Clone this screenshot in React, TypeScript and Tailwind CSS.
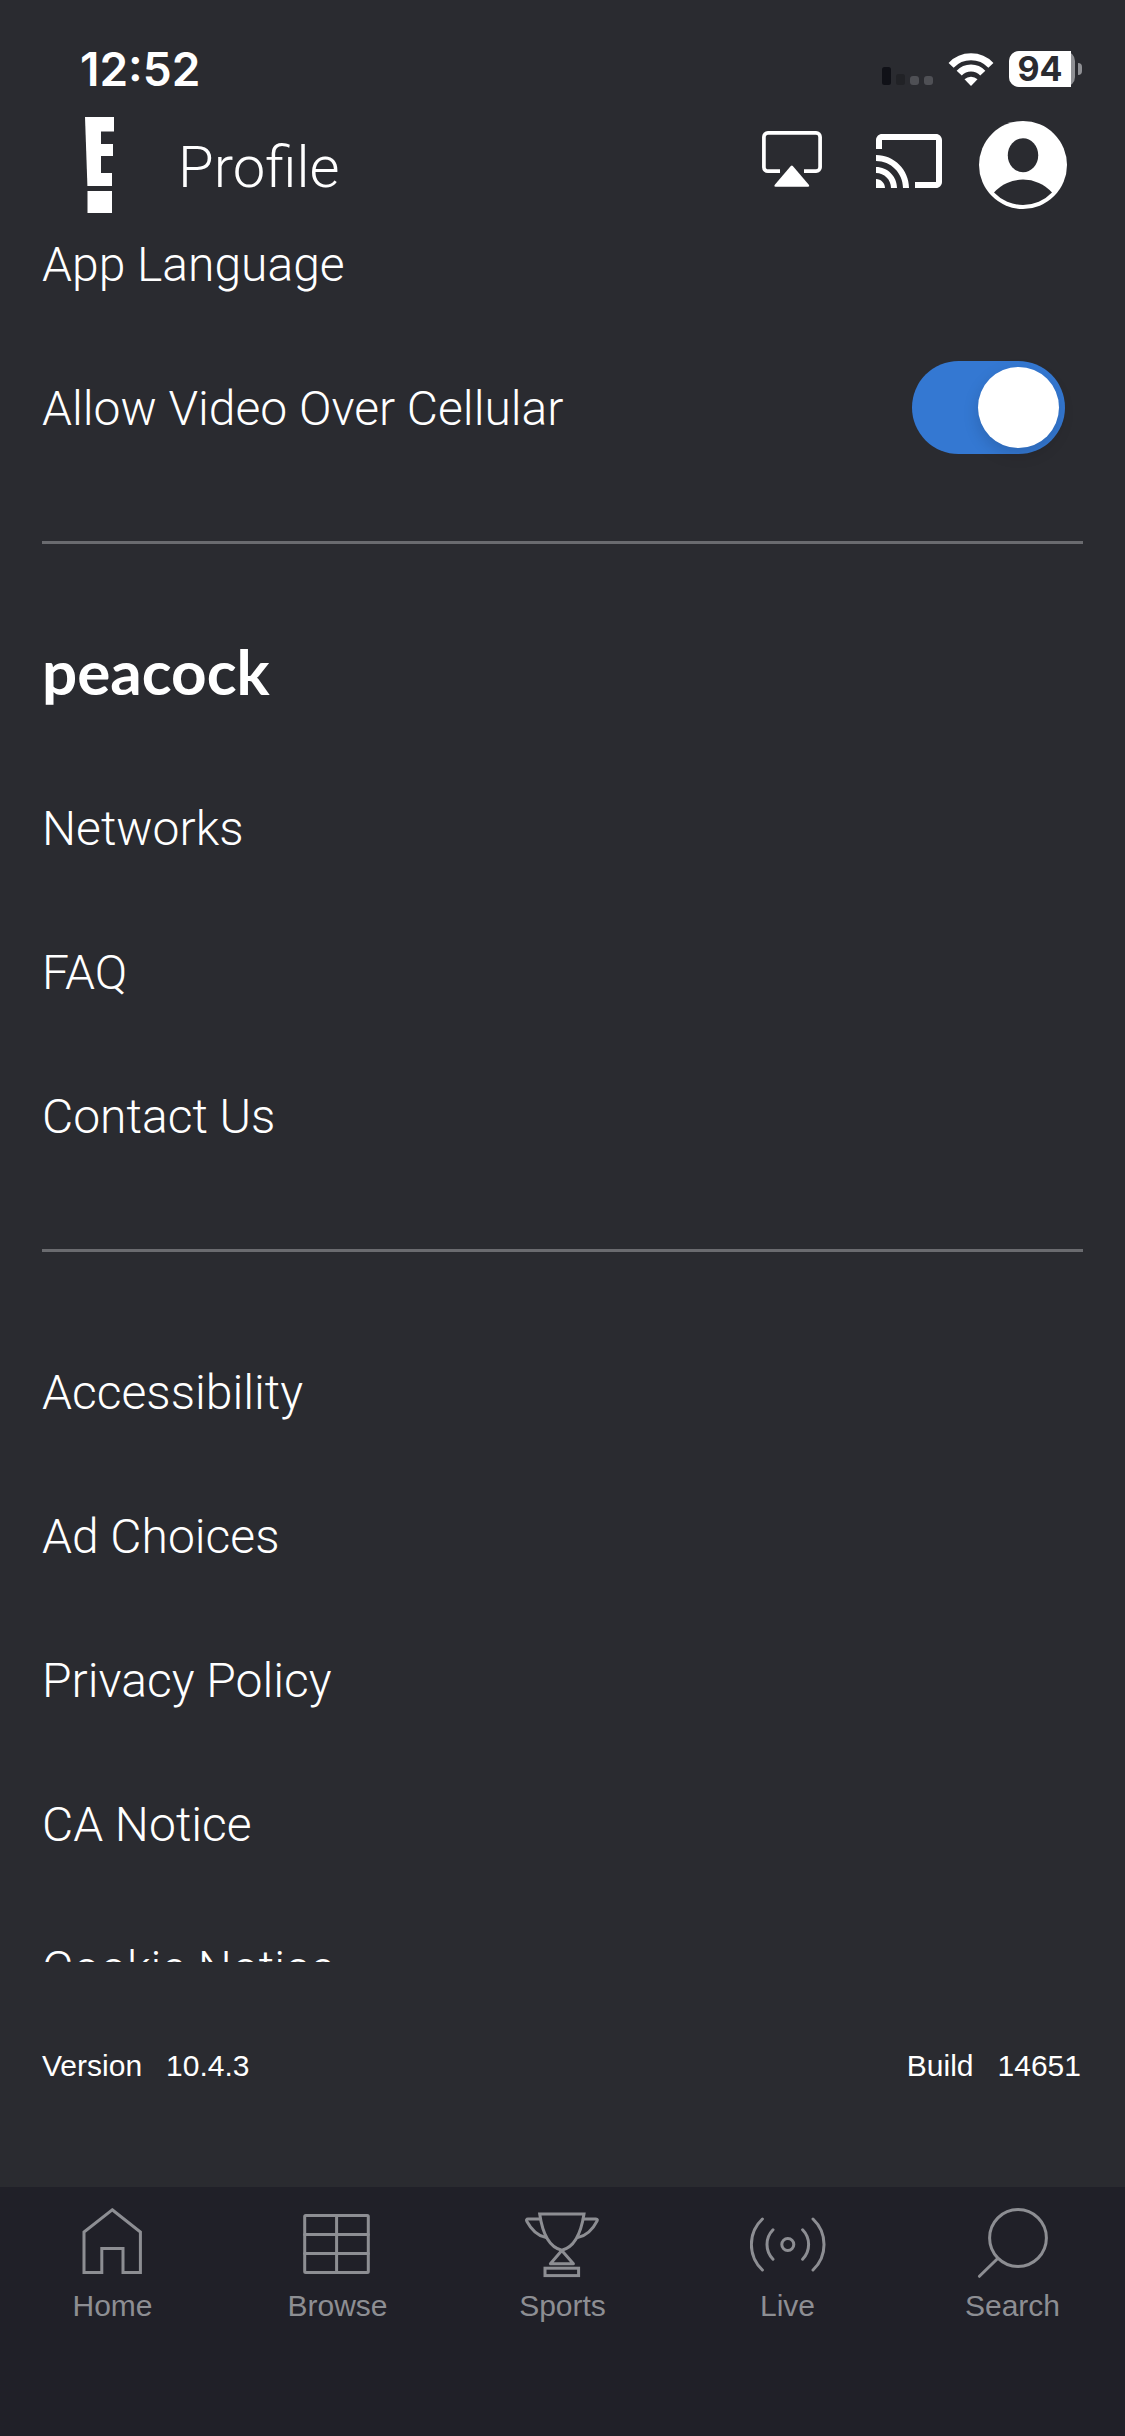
import React, { useState } from 'react';

const peacockLinks = ['Networks', 'FAQ', 'Contact Us'];
const legalLinks = ['Accessibility', 'Ad Choices', 'Privacy Policy', 'CA Notice', 'Cookie Notice'];

const tabs = [
  { label: 'Home', icon: HomeIcon },
  { label: 'Browse', icon: BrowseIcon },
  { label: 'Sports', icon: SportsIcon },
  { label: 'Live', icon: LiveIcon },
  { label: 'Search', icon: SearchIcon },
];

// Shared frame for the outline icons in the tab bar
function TabIcon({ children }: { children: React.ReactNode }) {
  return (
    <svg
      viewBox="1 0 76 76"
      className="w-[76px] h-[76px]"
      fill="none"
      stroke="currentColor"
      strokeWidth="3"
      strokeLinecap="round"
      strokeLinejoin="round"
      aria-hidden="true"
    >
      {children}
    </svg>
  );
}

function HomeIcon() {
  return (
    <TabIcon>
      <path strokeLinejoin="miter" d="M38.2 4.8 66.4 27V67.6H49V43.4H27.8V67.6H10V27Z" />
    </TabIcon>
  );
}

function BrowseIcon() {
  return (
    <TabIcon>
      <rect x="5.7" y="10.4" width="63.6" height="57.2" rx="1" />
      <path d="M37.6 10.4V67.6M5.7 29.4H69.3M5.7 48.5H69.3" />
    </TabIcon>
  );
}

function SportsIcon() {
  return (
    <TabIcon>
      <path strokeLinejoin="miter" d="M15.7 9H60C57.5 25 52 42 37.8 45.2 23.6 42 18 25 15.7 9Z" />
      <path d="M16.6 14H4C2.6 14 2.2 15 2.8 16.2 7 24 13 30.6 21.6 32.4M59.2 14H72C73.4 14 73.6 15 73 16.2 69 24 62.8 30.6 54.2 32.4" />
      <path d="M37.8 45.6 26.4 58.8H49.4Z" />
      <rect strokeLinejoin="miter" x="21" y="63.2" width="33.6" height="7.4" />
    </TabIcon>
  );
}

function LiveIcon() {
  return (
    <TabIcon>
      <path d="M13.4 14A35 35 0 0 0 13.4 65M64 14A35 35 0 0 1 64 65M24 24.8A21 21 0 0 0 24 54.2M53.6 24.8A21 21 0 0 1 53.6 54.2" />
      <circle cx="38.8" cy="39.5" r="6" />
    </TabIcon>
  );
}

function SearchIcon() {
  return (
    <TabIcon>
      <circle cx="44" cy="33" r="28.4" />
      <path d="M23.4 53.7 5.4 71.3" />
    </TabIcon>
  );
}

function StatusBar() {
  return (
    <div className="h-[117px] pt-[21px] pl-20 pr-[43px] flex items-center justify-between shrink-0">
      <span className="font-[Inter,sans-serif] font-semibold text-[46px] leading-[54px]">12:52</span>
      <div className="flex items-center gap-[15px]">
        <svg viewBox="0 0 51 36" className="w-[51px] h-9" aria-hidden="true">
          <rect x="0" y="16" width="9" height="18" rx="2.5" fill="#101117" />
          <rect x="14" y="23" width="9" height="11" rx="2.5" fill="#212226" />
          <rect x="28" y="25" width="9" height="9" rx="3" fill="#4f5055" />
          <rect x="42" y="25" width="9" height="9" rx="3" fill="#4f5055" />
        </svg>
        <svg viewBox="0 0 45 33" className="w-[46px] h-[33px]" fill="none" stroke="white" strokeWidth="7" aria-hidden="true">
          <path d="M2.6 12.4A27.4 27.4 0 0 1 42.4 12.4M10.7 20.2A16.2 16.2 0 0 1 34.3 20.2" />
          <path stroke="none" fill="white" d="M22.5 33 16 26.2A9.6 9.6 0 0 1 29 26.2Z" />
        </svg>
        <div className="flex items-center gap-[3px]">
          <div className="w-[66px] rounded-[10px] bg-[#8f9094]">
            <div className="w-[62px] rounded-l-[10px] bg-white text-center text-[#2a2b30] font-[Inter,sans-serif] font-bold text-[34px] leading-9">
              94
            </div>
          </div>
          <div className="w-1 h-3 rounded-r-full bg-[#8f9094]" />
        </div>
      </div>
    </div>
  );
}

function Header() {
  return (
    <header className="h-24 mb-6 pl-[85px] pr-[58px] flex items-center justify-between shrink-0">
      <div className="flex items-center gap-16">
        <svg viewBox="0 0 29 96" className="w-[29px] h-24" fill="white" role="img" aria-label="E!">
          <rect width="13" height="69" transform="skewX(2)" />
          <rect x="5" width="11" height="69" />
          <rect x="10" width="19" height="14.5" />
          <rect x="10" y="27" width="18" height="12" />
          <rect x="10" y="56" width="17" height="13" />
          <rect x="2.5" y="74" width="24.5" height="22" />
        </svg>
        <h1 className="pt-1 text-[58px] leading-[68px]">Profile</h1>
      </div>
      <div className="flex items-center">
        <button type="button" aria-label="AirPlay" className="mr-[54px]">
          <svg viewBox="0 0 60 68" className="w-[60px] h-[68px]">
            <path
              d="M18 40.2H6A4 4 0 0 1 1.900 36.2V5.900A4 4 0 0 1 5.900 1.900H54.1A4 4 0 0 1 58.1 5.900V36.2A4 4 0 0 1 54.1 40.2H42"
              fill="none"
              stroke="white"
              strokeWidth="3.7"
            />
            <path d="M28.8 35Q29.8 34 30.8 35L47 54Q48 55.6 46 55.7H13.5Q11.6 55.6 12.6 54Z" fill="white" />
          </svg>
        </button>
        <button type="button" aria-label="Cast" className="mr-[37px]">
          <svg viewBox="1 3 22 20.667" className="w-[66px] h-[62px]" fill="white">
            <path d="M21 3H3c-1.1 0-2 .9-2 2v3h2V5h18v14h-7v2h7c1.1 0 2-.9 2-2V5c0-1.1-.9-2-2-2zM1 18v3h3c0-1.66-1.34-3-3-3zm0-4v2c2.76 0 5 2.24 5 5h2c0-3.87-3.13-7-7-7zm0-4v2c4.97 0 9 4.03 9 9h2c0-6.08-4.93-11-11-11z" />
          </svg>
        </button>
        <button type="button" aria-label="Account">
          <svg viewBox="0 0 88 88" className="w-[88px] h-[88px]">
            <circle cx="44" cy="44" r="44" fill="white" />
            <ellipse cx="44" cy="34.2" rx="15.2" ry="17" fill="#2a2b30" />
            <path d="M15 71.5A39 39 0 0 1 73 71.5A40 40 0 0 1 15 71.5Z" fill="#2a2b30" />
          </svg>
        </button>
      </div>
    </header>
  );
}

export default function App() {
  const [cellular, setCellular] = useState(true);

  return (
    <div className="h-screen flex flex-col bg-[#2a2b30] text-white font-[Roboto,sans-serif] font-light">
      <StatusBar />
      <Header />

      <main className="flex-1 min-h-0 overflow-hidden px-[42px] text-[48px] leading-14">
        <div className="flex flex-col gap-[88px]">
          <a href="#language" className="block">App Language</a>
          <div className="h-14 flex items-center justify-between">
            <label htmlFor="cellular">Allow Video Over Cellular</label>
            <input
              id="cellular"
              type="checkbox"
              role="switch"
              checked={cellular}
              onChange={e => setCellular(e.target.checked)}
              className="appearance-none shrink-0 flex items-center w-[153px] h-[93px] mr-[18px] mb-1 px-1.5 rounded-full bg-[#55565b] checked:bg-[#3478d2] checked:justify-end before:block before:size-[81px] before:rounded-full before:bg-white before:shadow-[0_6px_16px_rgba(0,0,0,0.15)]"
            />
          </div>
        </div>

        <hr className="mt-[104px] border-0 h-[3px] bg-[#6a6b6f]" />

        <h2 className="mt-[91px] mb-[94px] font-[Lato,sans-serif] font-bold text-[62px] leading-[72px]">peacock</h2>
        <nav className="flex flex-col gap-[88px]">
          {peacockLinks.map(name => (
            <a key={name} href="#" className="block">{name}</a>
          ))}
        </nav>

        <hr className="mt-[104px] mb-[113px] border-0 h-[3px] bg-[#6a6b6f]" />

        <nav className="flex flex-col gap-[88px]">
          {legalLinks.map(name => (
            <a key={name} href="#" className="block">{name}</a>
          ))}
        </nav>
      </main>

      <div className="shrink-0 pt-[86px] pb-[103px] pl-[42px] pr-11 flex justify-between font-['Liberation_Sans',sans-serif] font-normal text-[30px] leading-9">
        <div className="flex gap-6">
          <span>Version</span>
          <span>10.4.3</span>
        </div>
        <div className="flex gap-6">
          <span>Build</span>
          <span>14651</span>
        </div>
      </div>

      <nav className="shrink-0 pt-[18px] pb-28 grid grid-cols-5 bg-[#202028] text-[#8d8e93] font-['Liberation_Sans',sans-serif] font-normal text-[30px] leading-9">
        {tabs.map(tab => (
          <a key={tab.label} href="#" className="flex flex-col items-center gap-[7px]">
            <tab.icon />
            {tab.label}
          </a>
        ))}
      </nav>
    </div>
  );
}
